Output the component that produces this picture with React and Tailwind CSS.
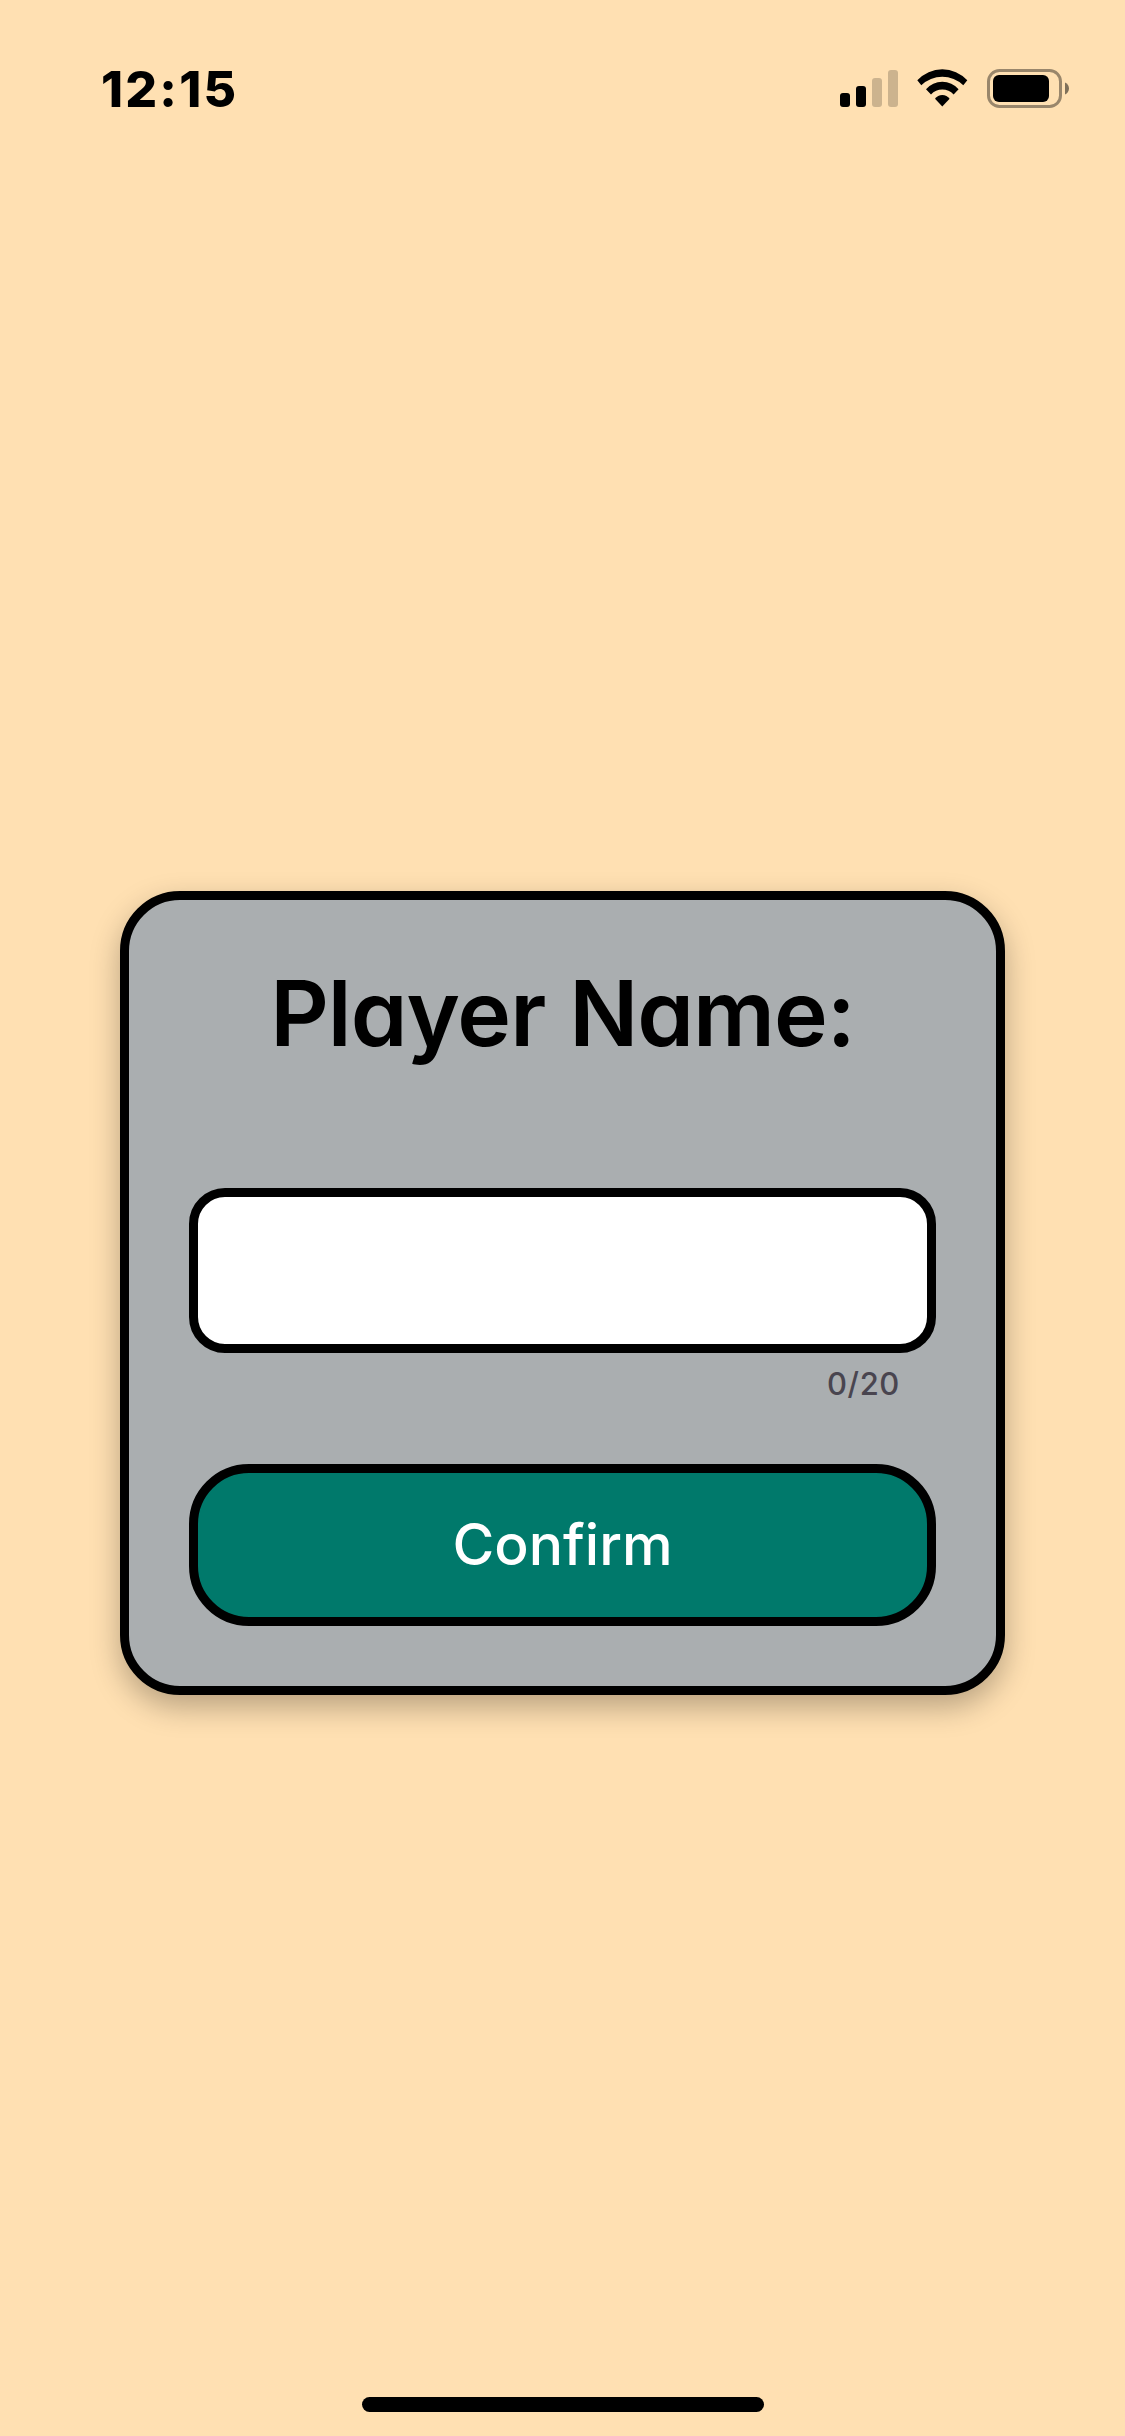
import { useState } from "react";

const MAX_NAME_LENGTH = 20;

const SignalIcon = () => (
  <svg width="58" height="37" viewBox="0 0 58 37">
    <rect x="0" y="23" width="10" height="14" rx="3" />
    <rect x="16" y="16" width="10" height="21" rx="3" />
    <rect x="32" y="8" width="10" height="29" rx="3" opacity="0.2" />
    <rect x="48" y="0" width="10" height="37" rx="3" opacity="0.2" />
  </svg>
);

const WifiIcon = () => (
  <svg width="51" height="38" viewBox="0 0 51 38">
    <path d="M0.3 11.3A34 34 0 0 1 50.3 11.3L46.3 16.2A30.5 30.5 0 0 0 4.3 16.2Z" />
    <path d="M9 20.2A21.7 21.7 0 0 1 41.6 20.2L36.6 25.5A15.3 15.3 0 0 0 14 25.5Z" />
    <path d="M18 29.8A8.9 8.9 0 0 1 32.6 29.8L25.3 37.5Z" />
  </svg>
);

const BatteryIcon = () => (
  <svg width="82" height="39" viewBox="0 0 82 39">
    <rect x="1.5" y="1.5" width="72" height="36" rx="11" fill="none" stroke="black" strokeWidth="3" opacity="0.4" />
    <rect x="6" y="6" width="56" height="27" rx="6" />
    <path d="M78 13.5C80.6 14.6 82 17 82 19.5C82 22 80.6 24.4 78 25.5Z" opacity="0.5" />
  </svg>
);

const StatusBar = () => (
  <header className="flex h-[132px] items-center justify-between pt-[46px] pr-[56px] pl-[101px]">
    <span className="text-[50px] leading-[60px] font-extrabold tracking-[2.2px]">12:15</span>
    <div className="mb-[2px] flex h-[40px] items-center">
      <SignalIcon />
      <div className="ml-[19px]">
        <WifiIcon />
      </div>
      <div className="ml-[19px]">
        <BatteryIcon />
      </div>
    </div>
  </header>
);

const App = () => {
  const [name, setName] = useState("");

  return (
    <div className="flex h-[2436px] w-[1125px] flex-col overflow-hidden bg-[#ffe0b2] font-['Inter',sans-serif] text-black">
      <StatusBar />

      <main className="flex flex-1 flex-col items-center pt-[759px]">
        <form
          className="flex h-[804px] w-[885px] flex-col rounded-[60px] border-[9px] border-black bg-[#aaaeb0] px-[60px] shadow-[0_12px_30px_rgba(0,0,0,0.28)]"
          onSubmit={(e) => e.preventDefault()}
        >
          <h1 className="mt-[53px] h-[120px] text-center text-[91px] leading-[120px] font-[560] tracking-[-1px] whitespace-nowrap [font-feature-settings:'cv11'] [word-spacing:2px]">
            Player Name:
          </h1>

          {/* Name Field */}
          <input
            type="text"
            value={name}
            maxLength={MAX_NAME_LENGTH}
            onChange={(e) => setName(e.target.value)}
            className="mt-[115px] h-[165px] w-full rounded-[36px] border-[9px] border-black bg-white px-9 text-5xl outline-none"
          />
          <p className="mt-[11px] h-[40px] pr-[36px] text-right text-[31px] leading-[40px] font-medium tracking-[0.6px] text-[#49454f]">
            {name.length}/{MAX_NAME_LENGTH}
          </p>

          <button
            type="submit"
            className="mt-[60px] h-[162px] w-full rounded-[60px] border-[9px] border-black bg-[#00796b] text-[57px] leading-[80px] font-medium text-white"
          >
            Confirm
          </button>
        </form>
      </main>

      {/* Home indicator */}
      <div className="mb-[24px] ml-[362px] h-[15px] w-[402px] rounded-full bg-black" />
    </div>
  );
};

export default App;
